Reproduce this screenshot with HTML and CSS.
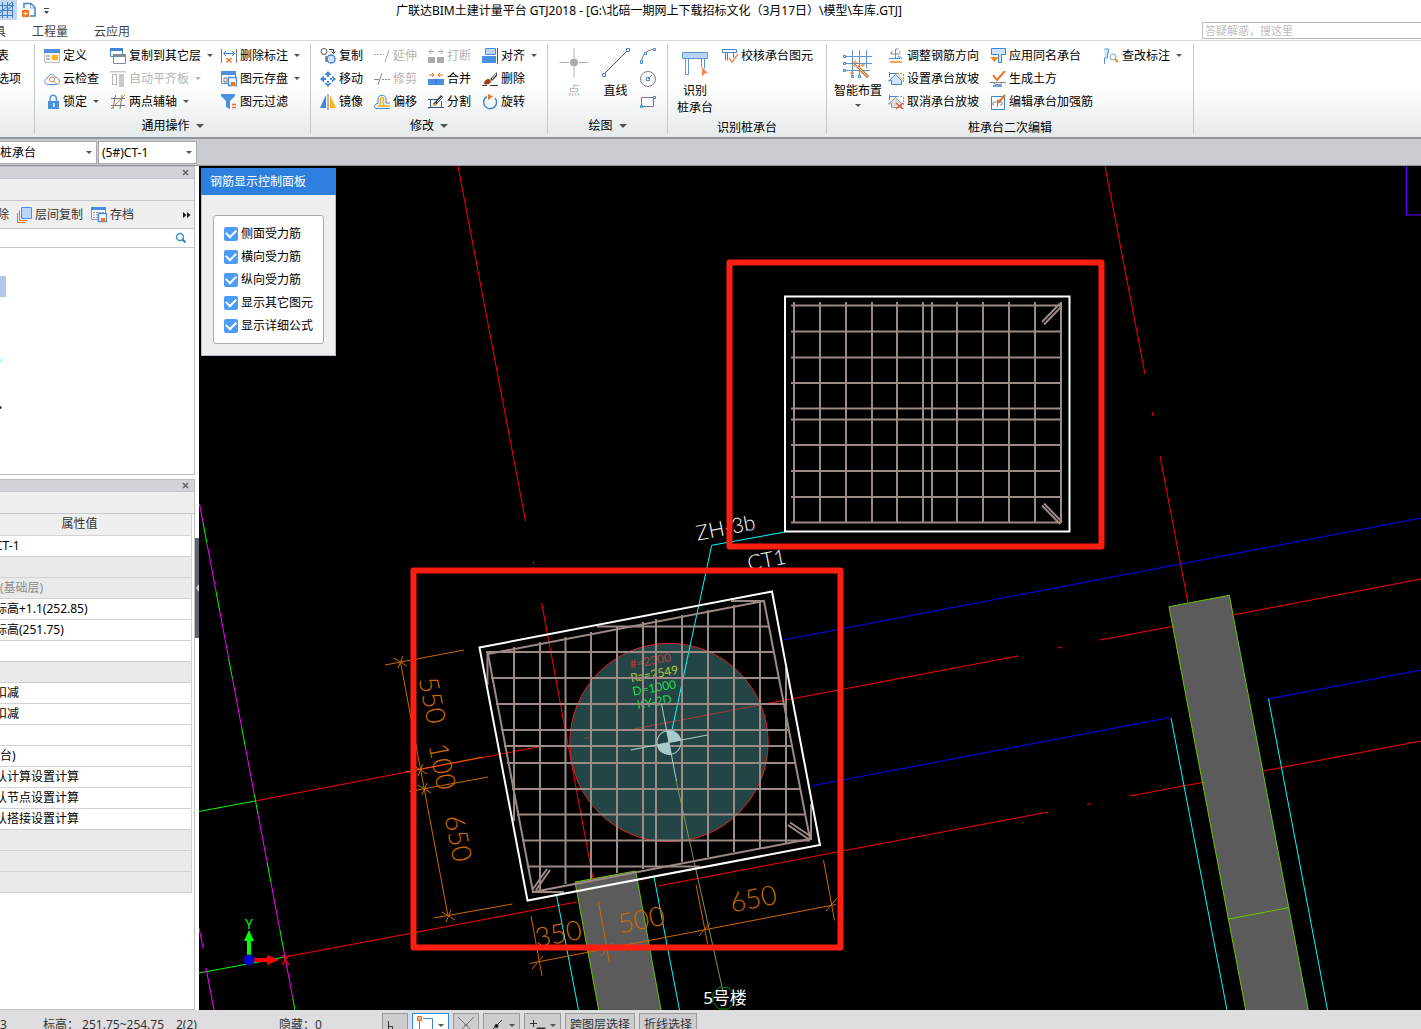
FILE: index.html
```html
<!DOCTYPE html>
<html lang="zh-CN">
<head>
  <meta charset="UTF-8">
  <meta name="viewport" content="width=device-width, initial-scale=1.0">
  <title>广联达BIM土建计量平台 GTJ2018</title>
  <link rel="stylesheet" href="styles.css">
</head>
<body>
  <!-- 标题栏 -->
  <header class="titlebar">
    <button type="button" class="quick active" aria-label="轴网">
      <svg width="17" height="18" viewBox="0 0 17 18" fill="none" stroke="#3d80cc"><path d="M0 4.500h14M0 9.500h13M0 14.500h13M2.500 1v16M7.500 1v16M12.500 1v16M0 12L12 1M6 10l7-6"/></svg>
    </button>
    <button type="button" class="quick" aria-label="新建">
      <svg width="16" height="16" viewBox="0 0 16 16" fill="none"><path d="M3 6V1.500h7l4 4V14h-5" stroke="#3d80cc" stroke-width="1.500"/><path d="M9.500 2v4h4" stroke="#8fa3b8"/><path d="M1 8h7v7H1z" fill="#ee7420"/><path d="M4.500 9.500v4M2.500 11.500h4" stroke="#fff"/></svg>
    </button>
    <button type="button" class="quick" aria-label="更多">
      <svg width="7" height="8" viewBox="0 0 7 8"><path d="M1 1h5v1H1zM1 4h5L3.500 7z" fill="#444"/></svg>
    </button>
    <h1>广联达BIM土建计量平台 GTJ2018 - [G:\北碚一期网上下载招标文化（3月17日）\模型\车库.GTJ]</h1>
  </header>
  <nav class="tabs">
    <a href="#" class="cut">具</a>
    <a href="#">工程量</a>
    <a href="#">云应用</a>
    <input type="text" class="ask" placeholder="答疑解惑，搜这里" aria-label="答疑解惑">
  </nav>

  <!-- 功能区 -->
  <section class="ribbon">
    <div class="group g-table">
      <div class="group-body">
        <div class="col">
          <button type="button" class="cmd cut">表</button>
          <button type="button" class="cmd cut">选项</button>
        </div>
      </div>
    </div>

    <div class="group g-common">
      <div class="group-body">
        <div class="col">
          <button type="button" class="cmd"><svg width="16" height="16" viewBox="0 0 16 16"><path d="M.5 1.500h15v13H.5z" fill="#f4f4f4" stroke="#b9c0c6"/><path d="M0 1h16v4H0z" fill="#4b90e0"/><path d="M2 8h4M2 11h4" stroke="#888"/><path d="M8 7h6v5H8z" fill="#fbb117"/></svg>定义</button>
          <button type="button" class="cmd"><svg width="16" height="16" viewBox="0 0 16 16" fill="none"><path d="M4 13.500C-.5 13.500 0 7.500 3.500 7.500 4 3 10 2 11.500 6.500c5 0 5 7 1 7z" stroke="#4b90e0"/><circle cx="8" cy="8.500" r="2.500" stroke="#ee7420"/><path d="M10 10.500l2.500 2.500" stroke="#ee7420"/></svg>云检查</button>
          <button type="button" class="cmd drop"><svg width="16" height="16" viewBox="0 0 16 16"><path d="M6 8V4.500a3.200 3.200 0 0 1 6.400 0V8" fill="none" stroke="#4b90e0" stroke-width="1.500"/><path d="M4 7h11v8H4z" fill="#4b90e0"/><path d="M9 9h1.500v4H9z" fill="#fff"/></svg>锁定</button>
        </div>
        <div class="col">
          <button type="button" class="cmd drop"><svg width="16" height="16" viewBox="0 0 16 16" fill="#fff"><path d="M.5.5h12v8H.5z" stroke="#3f85d6"/><path d="M0 0h13v3H0z" fill="#3f85d6"/><path d="M3.500 6.500h12v9h-12z" stroke="#7d8b96"/><path d="M3 6h13v3H3z" fill="#7d8b96"/></svg>复制到其它层</button>
          <button type="button" class="cmd drop" disabled><svg width="16" height="16" viewBox="0 0 16 16"><path d="M0 0h16v1.500H0zM9 3h5v13H9z" fill="#c9c9c9"/><path d="M2.500 3.500h4v10h-4z" fill="none" stroke="#b5b5b5"/></svg>自动平齐板</button>
          <button type="button" class="cmd drop"><svg width="16" height="16" viewBox="0 0 16 16" fill="none"><path d="M1 4.500h14M1 11.500h14M5.500 1L3 15M12 1l-2 14" stroke="#778"/><path d="M1 15L15 1" stroke="#e08a30"/></svg>两点辅轴</button>
        </div>
        <div class="col">
          <button type="button" class="cmd drop"><svg width="16" height="16" viewBox="0 0 16 16" fill="none"><path d="M.5 1v14M15.500 1v14" stroke="#778"/><path d="M3 5.500h10M5 3L2.500 5.500 5 8M11 3l2.500 2.500L11 8" stroke="#3f85d6"/><path d="M5.500 10l5 4.500M10.500 10l-5 4.500" stroke="#ee7420" stroke-width="1.500"/></svg>删除标注</button>
          <button type="button" class="cmd drop"><svg width="16" height="16" viewBox="0 0 16 16"><path d="M.5.5h14v12H.5z" fill="#fff" stroke="#4b90e0"/><path d="M0 0h15v4H0z" fill="#4b90e0"/><path d="M3 7h3v4H3z" fill="none" stroke="#777"/><path d="M7.500 6.500h8v8h-8z" fill="#fff" stroke="#4b90e0" stroke-width="1.500"/><path d="M10 11h4v4h-4z" fill="#ee7420"/></svg>图元存盘</button>
          <button type="button" class="cmd"><svg width="16" height="16" viewBox="0 0 16 16"><path d="M0 0h14v2L9 7v8l-4-2V7L0 2z" fill="#4b90e0"/><path d="M11 10.500h4M11 13.500h4" stroke="#ee7420" stroke-width="1.500"/></svg>图元过滤</button>
        </div>
      </div>
      <button type="button" class="group-label drop">通用操作</button>
    </div>

    <div class="group g-edit">
      <div class="group-body">
        <div class="col">
          <button type="button" class="cmd"><svg width="16" height="16" viewBox="0 0 16 16" fill="none"><circle cx="4" cy="3.500" r="3" stroke="#555"/><circle cx="11" cy="11" r="4" fill="#cfe3fb" stroke="#3f85d6" stroke-width="1.500"/><path d="M9 1.500h4.500v3M11.500 3.500l2 2 2-2M6 8v6" stroke="#333"/></svg>复制</button>
          <button type="button" class="cmd"><svg width="16" height="16" viewBox="0 0 16 16" fill="#3f85d6"><path d="M8 0l3.500 4h-7zM8 16l3.500-4h-7zM0 8l4-3.500v7zM16 8l-4-3.500v7zM7 3h2v3H7zM7 10h2v3H7zM3 7h3v2H3zM10 7h3v2h-3z"/></svg>移动</button>
          <button type="button" class="cmd"><svg width="16" height="16" viewBox="0 0 16 16"><path d="M6 1v13H0z" fill="#3f85d6"/><path d="M10 1v13h6z" fill="#fbb117"/><path d="M8 0v16" stroke="#777"/></svg>镜像</button>
        </div>
        <div class="col">
          <button type="button" class="cmd" disabled><svg width="16" height="16" viewBox="0 0 16 16" fill="none" stroke="#aaa"><path d="M0 6.500h10" stroke-dasharray="2 1"/><path d="M15 2l-4 12"/></svg>延伸</button>
          <button type="button" class="cmd" disabled><svg width="16" height="16" viewBox="0 0 16 16" fill="none" stroke="#888"><path d="M0 8.500h5M8 2L4 14"/><path d="M8 8.500h8" stroke-dasharray="2 1"/></svg>修剪</button>
          <button type="button" class="cmd"><svg width="16" height="16" viewBox="0 0 16 16" fill="none"><path d="M16 14.500H2c-2-1-2-5 2-5V5c0-5 8-5 8 0v4h4" stroke="#3f85d6"/><path d="M16 12H3.500M6.500 11V5c0-2 3-2 3 0v6" stroke="#fbb117" stroke-width="1.500"/></svg>偏移</button>
        </div>
        <div class="col">
          <button type="button" class="cmd" disabled><svg width="16" height="16" viewBox="0 0 16 16"><path d="M0 9h7v6H0zM9 9h7v6H9z" fill="#aaa"/><path d="M1 3.500h5M3.500 1L1 3.500 3.500 6M10 3.500h5M12.500 1L15 3.500 12.500 6" fill="none" stroke="#aaa"/></svg>打断</button>
          <button type="button" class="cmd"><svg width="16" height="16" viewBox="0 0 16 16"><path d="M0 8h16v6H0z" fill="#4b90e0"/><path d="M8 8v6" stroke="#2d6bb5"/><path d="M1 4h5M4 2l2 2-2 2M15 4h-5M12 2l-2 2 2 2" fill="none" stroke="#ee7420"/></svg>合并</button>
          <button type="button" class="cmd"><svg width="16" height="16" viewBox="0 0 16 16" fill="none"><path d="M0 5.500h9M2.500 5v9M0 13.500h16M13.500 7v7M5 13L0 14" stroke="#3c5580"/><path d="M6 11l8-9" stroke="#444" stroke-width="3"/><path d="M9 8l5-5" stroke="#eee"/><path d="M5 12l2-3 2 2z" fill="#fbb117"/></svg>分割</button>
        </div>
        <div class="col">
          <button type="button" class="cmd drop"><svg width="16" height="16" viewBox="0 0 16 16"><path d="M3.500.5h10v6h-10z" fill="#b9d6fa" stroke="#4b90e0"/><path d="M0 8h14v7H0z" fill="#4b90e0"/><path d="M15.500 0v16" stroke="#555"/></svg>对齐</button>
          <button type="button" class="cmd"><svg width="16" height="16" viewBox="0 0 16 16"><path d="M0 14.500h5M8 14.500h8" stroke="#333"/><path d="M8 8l7-7v4l-5 5z" fill="#444"/><path d="M10 8l4-5" stroke="#eee"/><path d="M2 13c0-3 2-5 5-5l2 2c0 3-4 4-7 3z" fill="#a33c16"/></svg>删除</button>
          <button type="button" class="cmd"><svg width="16" height="16" viewBox="0 0 16 16"><path d="M5 2.500A6.500 6.500 0 1 0 13 4" fill="none" stroke="#3f85d6" stroke-width="1.500"/><path d="M6 0l5 2.500L6 6z" fill="#ee7420"/></svg>旋转</button>
        </div>
      </div>
      <button type="button" class="group-label drop">修改</button>
    </div>

    <div class="group g-draw">
      <div class="group-body">
        <button type="button" class="big" disabled><svg width="30" height="30" viewBox="0 0 30 30"><path d="M.5 14.500h29M15 .5v29" stroke="#aaa"/><circle cx="15" cy="14.500" r="4.500" fill="#aaa" stroke="#fff"/></svg>点</button>
        <button type="button" class="big"><svg width="30" height="30" viewBox="0 0 30 30"><path d="M3 26L27 2" stroke="#555"/><path d="M1.500 25.500h3v3h-3zM25.500.5h3v3h-3z" fill="#fff" stroke="#3f85d6"/></svg>直线</button>
        <div class="col">
          <button type="button" class="cmd" aria-label="弧线"><svg width="16" height="16" viewBox="0 0 16 16" fill="#fff"><path d="M1.500 14C2 6 7 2 14 1.500" fill="none" stroke="#778"/><path d="M.5 12.500h2v3h-2zM4.500 4.500h2v2h-2zM13.500.5h2v2h-2z" stroke="#3f85d6"/></svg></button>
          <button type="button" class="cmd" aria-label="圆"><svg width="16" height="16" viewBox="0 0 16 16" fill="none"><circle cx="8" cy="8" r="7.500" stroke="#778"/><path d="M8 8l4-4M6.500 6.500h3v3h-3z" stroke="#3f85d6"/></svg></button>
          <button type="button" class="cmd" aria-label="矩形"><svg width="16" height="16" viewBox="0 0 16 16" fill="#fff"><path d="M1.500 3.500h12v9h-12z" stroke="#778"/><path d="M.5 11.500h2v2h-2zM13.500 2.500h2v2h-2z" stroke="#3f85d6"/></svg></button>
        </div>
      </div>
      <button type="button" class="group-label drop">绘图</button>
    </div>

    <div class="group g-detect">
      <div class="group-body">
        <button type="button" class="big"><svg width="30" height="30" viewBox="0 0 30 30"><path d="M2.500 4.500h25v6h-25z" fill="#b9d6fa" stroke="#5a96d8"/><path d="M5.500 10.500h3v16h-3zM21.500 10.500v9M24.500 10.500v10" fill="none" stroke="#5a96d8"/><path d="M22 19l6 6-3 .5-3 3z" fill="#f58a5a"/></svg>识别<br>桩承台</button>
        <div class="col">
          <button type="button" class="cmd"><svg width="16" height="16" viewBox="0 0 16 16" fill="none"><path d="M.5 1.500h14v3H.5zM3.500 4.500v8M5.500 4.500v8M11.500 4.500v5" stroke="#3f85d6"/><path d="M7 10l3 4 6-8" stroke="#f58a5a" stroke-width="1.500"/></svg>校核承台图元</button>
        </div>
      </div>
      <div class="group-label plain">识别桩承台</div>
    </div>

    <div class="group g-cap">
      <div class="group-body">
        <button type="button" class="big drop"><svg width="30" height="30" viewBox="0 0 30 30" fill="none"><path d="M3 8.500h26M3 15.500h26M3 22.500h24M9.500 2v26M16.500 2v26M23.500 2v18" stroke="#5a96d8"/><path d="M.5 7.500h2v2h-2zM.5 14.500h2v2h-2zM.5 21.500h2v2h-2zM8.500 27.500h2v2h-2zM15.500 27.500h2v2h-2z" fill="#fff" stroke="#3f85d6"/><path d="M14 18l11 11" stroke="#c47a3a" stroke-width="3"/><path d="M14 18l10 10" stroke="#f2c79a"/><path d="M10 14l4 4M14 14l-4 4M12 12v7M20 15v4M9 23v4M7 25h4M18 17h4" stroke="#ee7420"/></svg>智能布置</button>
        <div class="col">
          <button type="button" class="cmd"><svg width="16" height="16" viewBox="0 0 16 16" fill="none"><path d="M7.500 10V1h3M3 6h8c2-1 1-3 0-3M3 6c-1-2 1-3 2-2" stroke="#7d8b96"/><path d="M1 10.500h11" stroke="#3f85d6"/><path d="M2 14h12" stroke="#f08a20" stroke-width="1.500"/><path d="M10 8l4 2.500" stroke="#3f85d6"/></svg>调整钢筋方向</button>
          <button type="button" class="cmd"><svg width="16" height="16" viewBox="0 0 16 16" fill="none"><path d="M1.500 1v5M1.500 2.500H9" stroke="#3f85d6"/><path d="M.5 10l7-6.500 6 6v4H3.500v-4z" fill="#cfe3fb" stroke="#3f85d6"/><path d="M9 2.500h6M15.500 3v8M10 3l5 6" stroke="#f08a20" stroke-dasharray="2 1"/></svg>设置承台放坡</button>
          <button type="button" class="cmd"><svg width="16" height="16" viewBox="0 0 16 16" fill="none"><path d="M1.500 1v5M1.500 2.500H9" stroke="#3f85d6"/><path d="M.5 10l7-6.500 6 6v4H3.500v-4z" fill="#ddd" stroke="#999"/><path d="M9 2.500h6M15.500 3v8" stroke="#999" stroke-dasharray="2 1"/><path d="M8 9l7 6M15 9l-7 6" stroke="#e06048" stroke-width="1.500"/></svg>取消承台放坡</button>
        </div>
        <div class="col">
          <button type="button" class="cmd"><svg width="16" height="16" viewBox="0 0 16 16"><path d="M1.500.5h14v6h-4v8h-3v-8h-7z" fill="#cfe3fb" stroke="#3f85d6"/><path d="M0 9h9l-4.500 5z" fill="#f08a20"/></svg>应用同名承台</button>
          <button type="button" class="cmd"><svg width="16" height="16" viewBox="0 0 16 16" fill="none"><path d="M3 4l4 5 8-9" stroke="#ee7420" stroke-width="2"/><path d="M0 11.500h4l1 2h6l1-2h4M4 11.500h8" stroke="#7d8b96"/><path d="M3 15h9" stroke="#3f85d6" stroke-width="1.500"/></svg>生成土方</button>
          <button type="button" class="cmd"><svg width="16" height="16" viewBox="0 0 16 16" fill="none"><path d="M1.500 2.500h13v13h-13z" fill="#fff" stroke="#3f85d6"/><path d="M7.500 13V6h3M4 11H3V8h9v3h-2" stroke="#7d8b96"/><path d="M8 9l7-8" stroke="#ee7420" stroke-width="2"/></svg>编辑承台加强筋</button>
        </div>
        <div class="col">
          <button type="button" class="cmd drop"><svg width="16" height="16" viewBox="0 0 16 16"><path d="M1.500 1h4v4h-1v5h-3v6" fill="#cfe3fb" stroke="#5a96d8"/><circle cx="10" cy="9" r="3" fill="#fff" stroke="#7aa5dc"/><path d="M12 11l3 3" stroke="#f08a20" stroke-width="2"/></svg>查改标注</button>
        </div>
      </div>
      <div class="group-label plain">桩承台二次编辑</div>
    </div>
  </section>

  <!-- 构件选择 -->
  <section class="pickbar">
    <label class="pick"><select aria-label="构件类型"><option>桩承台</option></select></label>
    <label class="pick"><select aria-label="构件名称"><option>(5#)CT-1</option></select></label>
  </section>

  <main class="work">
    <aside class="dock">
      <section class="pane">
        <div class="pane-title"><button type="button" aria-label="关闭"><svg width="7" height="7" viewBox="0 0 7 7"><path d="M1 1l5 5M6 1L1 6" stroke="#666" stroke-width="1.500"/></svg></button></div>
        <div class="pane-head"></div>
        <div class="pane-tools">
          <button type="button" class="cmd cut">除</button>
          <button type="button" class="cmd"><svg width="15" height="16" viewBox="0 0 15 16" fill="none"><path d="M.5 6v9.500h8M2.500 3.500v10h8" stroke="#ee7420"/><path d="M4.500.5h10v11h-10z" fill="#b9d6fa" stroke="#4b90e0"/></svg>层间复制</button>
          <button type="button" class="cmd"><svg width="16" height="16" viewBox="0 0 16 16"><path d="M.5.5h14v12H.5z" fill="#fff" stroke="#8a9aaa"/><path d="M0 0h15v3H0z" fill="#4b90e0"/><path d="M2 5.500h11M2 8h5M2 10.500h5" stroke="#999" stroke-dasharray="2 1"/><path d="M7.500 6.500h8v8h-8z" fill="#fff" stroke="#4b90e0" stroke-width="1.500"/><path d="M10 11h4v4h-4z" fill="#ee7420"/></svg>存档</button>
          <button type="button" class="more" aria-label="更多"><svg width="8" height="6" viewBox="0 0 8 6"><path d="M0 0l3.500 3L0 6zM4 0l3.500 3L4 6z" fill="#222"/></svg></button>
        </div>
        <div class="pane-search">
          <input type="text" aria-label="搜索构件">
          <svg width="12" height="12" viewBox="0 0 12 12" fill="none"><circle cx="5" cy="5" r="3.500" stroke="#3a94c8" stroke-width="1.500"/><path d="M7.500 7.500l3 3" stroke="#2f7fb2" stroke-width="2"/></svg>
        </div>
        <div class="tree">
          <svg width="8" height="140" viewBox="0 0 8 140"><path d="M0 0h6v21H0z" fill="#b0c9ea"/><path d="M0 82h1v5H0z" fill="#9ff"/><circle cx="0" cy="131.500" r="1.500" fill="#223"/></svg>
        </div>
      </section>

      <section class="pane props">
        <div class="pane-title"><button type="button" aria-label="关闭"><svg width="7" height="7" viewBox="0 0 7 7"><path d="M1 1l5 5M6 1L1 6" stroke="#666" stroke-width="1.500"/></svg></button></div>
        <div class="pane-head"></div>
        <table>
          <thead><tr><th>属性值</th></tr></thead>
          <tbody>
            <tr><td class="cut">CT-1</td></tr>
            <tr class="gray"><td></td></tr>
            <tr class="gray"><td>(基础层)</td></tr>
            <tr><td class="cut">标高+1.1(252.85)</td></tr>
            <tr><td class="cut">标高(251.75)</td></tr>
            <tr><td></td></tr>
            <tr class="gray"><td></td></tr>
            <tr><td class="cut">扣减</td></tr>
            <tr><td class="cut">扣减</td></tr>
            <tr><td></td></tr>
            <tr><td>台)</td></tr>
            <tr><td class="cut">认计算设置计算</td></tr>
            <tr><td class="cut">认节点设置计算</td></tr>
            <tr><td class="cut">认搭接设置计算</td></tr>
            <tr class="gray"><td></td></tr>
            <tr class="gray"><td></td></tr>
            <tr class="gray"><td></td></tr>
          </tbody>
        </table>
      </section>
    </aside>

    <div class="splitter">
      <button type="button" aria-label="收起"><svg width="4" height="8" viewBox="0 0 4 8"><path d="M4 0v8L1 4z" fill="#ccd2d8"/></svg></button>
    </div>

    <div class="canvas">
      <svg class="drawing" viewBox="199 166 1222 844" preserveAspectRatio="xMinYMin slice" fill="none">
        <!-- 梁 -->
        <g fill="#5b5b5b" stroke="#6bc400">
          <path d="M1245.700 1010L1169 606.700l60.300-11.400L1308.300 1010"/>
          <path d="M1228.700 919l60-11.300"/>
          <path d="M598.700 1010L575 882l60.700-11L661 1010"/>
        </g>
        <!-- 轴线 -->
        <g stroke="#f00">
          <path d="M458 166l67.500 355M533 561l1 3M541.700 603L593 879"/>
          <path d="M1105 166l40 208M1152 412l1 4M1160 456l28 147"/>
          <path d="M255 801l283-54M770 703l248-47M1058 648l4-1M1100 640l72-13.500M1233 615l188-36"/>
          <path d="M285 957l292-55M658 886l390-74M1087 804.500l4-1M1130 796l72-13.500M1263 771l158-30"/>
        </g>
        <path d="M783 640l638-122M811 786l359-68.500M1268 699l153-29" stroke="#00f"/>
        <path d="M1406.500 166v49h15" stroke="#6a00ff"/>
        <path d="M199 811.500L255 801M199 973l86-16" stroke="#0f0"/>
        <path d="M199.500 504L295 1010" stroke="#0f0" stroke-dasharray="21 48" stroke-dashoffset="-19"/>
        <path d="M199.500 504L295 1010" stroke="#f0f" stroke-dasharray="48 21" stroke-dashoffset="29"/>
        <path d="M199 928l4 20M206 968l8 42" stroke="#f0f"/>
        <path d="M1171 718l56 292M1268.500 699l59 311M556.700 896l21.800 114M654 877l25.500 133" stroke="#0ff"/>

        <!-- 桩 -->
        <circle cx="669" cy="742.500" r="99.200" fill="#234545" stroke="#e02020"/>
        <path d="M634 729l136-26M585 738.500l4-1" stroke="#a63c3c"/>
        <path d="M785 532l-73.300 13.300L672 730" stroke="#0ff"/>
        <path d="M676 780l48 216" stroke="#7d9350"/>
        <g class="pile-text">
          <text transform="translate(651 665) rotate(-10)" fill="#b04040">#=2300</text>
          <text transform="translate(655 678) rotate(-10)" fill="#b4c83c">Ra=2549</text>
          <text transform="translate(655 692) rotate(-10)" fill="#1fd84a">D=1000</text>
          <text transform="translate(655 706) rotate(-10)" fill="#1fd84a">KY-2D</text>
        </g>

        <!-- 承台一钢筋 -->
        <path stroke="#9c8a84" stroke-width="2" d="M794 302v221M820 302v221M846 302v221M872 302v221M897 302v221M923 302v221M932 302v221M957 302v221M983 302v221M1009 302v221M1035 302v221M1061 302v221M791 305.500h270M791 331.500h270M791 357.500h270M791 383h270M791 408.500h270M791 419.500h270M791 445h270M791 471h270M791 497h270M791 522.500h270M1042 322l18-18.500M1044 324.500l18-18.500M1042 505.500l18 18.500M1044 503.500l18 18.500"/>
        <path d="M785 296.500h284.500v235H785z" stroke="#fff" stroke-width="2"/>

        <!-- 承台二钢筋 -->
        <g stroke="#9c8a84" stroke-width="2">
          <path d="M488 654l276-53 46 238-277 53z"/>
          <path d="M731 601h33M597 626.500h172M486 652h287M491 678h288M496 704h287M501 730h287M504 746h287M507 763h289M512 789h288M517 814.500h289M522 840.500h288M527 866.500h173M533 892h31"/>
          <path d="M487.500 652v33M514 647v174M540 642v249M565.500 637v247M591 632v247M617 627v246M643 622v247M656 619v248M682 615v247M708 610v247M734 605v247M760 601v247M786 668v175M811 804v36"/>
          <path d="M547 869l-14 20M550 870l-14 20M788 825l21 14.500M790 822.500l21 14"/>
        </g>
        <path d="M479.500 647.500l292.500-56 48 253.500-292.500 55.500z" stroke="#fff" stroke-width="2"/>

        <!-- 桩中心 -->
        <g transform="translate(669 742.500) rotate(-11)">
          <circle r="12" stroke="#a9cbcb"/>
          <path d="M0 0V-12A12 12 0 0 1 12 0zM0 0V12A12 12 0 0 1-12 0z" fill="#a9cbcb"/>
          <path d="M-39 0h78M0-39v78" stroke="#a9cbcb"/>
        </g>

        <!-- 尺寸标注 -->
        <g stroke="#d06800">
          <path d="M400.500 662L448 916M385 665l79-15M405 772l78-15M409.500 791.500L488 777M433.500 918l79-14"/>
          <path d="M394 658l13 8M403 656l-5 12M414 766l13 8M423 764l-5 12M418 785l13 8M427 783l-5 12M442 912l13 8M451 910l-5 12"/>
          <path d="M529.500 963.500L836 904.500M531 916l11 60M598.500 902.500l11 60.500M696 884.500l11.700 59.500M823.500 860l11 60.500"/>
          <path d="M532 969l11-13M601 956l11-13M699 936l11-13M826 911l11-13"/>
        </g>
        <g class="dim-text">
          <text transform="translate(423 702) rotate(79)">550</text>
          <text transform="translate(433 768) rotate(79)">100</text>
          <text transform="translate(449 840) rotate(79)">650</text>
          <text transform="translate(560 943) rotate(-11)">350</text>
          <text transform="translate(643 929) rotate(-11)">500</text>
          <text transform="translate(755 908) rotate(-11)">650</text>
        </g>
        <g class="mark-text">
          <text transform="translate(727 535) rotate(-11)">ZH-3b</text>
          <text transform="translate(768 567) rotate(-11)">CT1</text>
        </g>
        <path d="M719 987.500h9l7 6v9l-7 6.500h-9l-6-6.500v-9z" stroke="#008a10"/>
        <text x="725" y="1004" class="building">5号楼</text>

        <!-- 红框 -->
        <g stroke="#ff1e10" stroke-width="6" stroke-linejoin="round">
          <path d="M729.500 262.500h372v284h-372zM413.500 570.500h427v377h-427z"/>
        </g>

        <!-- 坐标轴 -->
        <path d="M247 956v-15h-3l5-11 5 11h-3v15z" fill="#0f0"/>
        <path d="M253 958h14v-3l12 5-12 5v-3h-14z" fill="#f00"/>
        <circle cx="249" cy="960" r="5.500" fill="#0000c8"/>
        <text x="249" y="929" class="axis" fill="#0f0">Y</text>
        <text x="285" y="965" class="axis" fill="#f00">X</text>
      </svg>

      <form class="rebar">
        <h2>钢筋显示控制面板</h2>
        <div class="rebar-list">
          <label><input type="checkbox" checked>侧面受力筋</label>
          <label><input type="checkbox" checked>横向受力筋</label>
          <label><input type="checkbox" checked>纵向受力筋</label>
          <label><input type="checkbox" checked>显示其它图元</label>
          <label><input type="checkbox" checked>显示详细公式</label>
        </div>
      </form>
    </div>
  </main>

  <!-- 状态栏 -->
  <footer class="status">
    <span class="floor">3</span>
    <span class="level">标高： 251.75~254.75</span>
    <span class="count">2(2)</span>
    <span class="hidden-count">隐藏：0</span>
    <button type="button" aria-label="正交"><svg width="16" height="18" viewBox="0 0 16 18"><path d="M1.500 5v12M1.500 10.500h4V17" fill="none" stroke="#333"/></svg></button>
    <button type="button" class="on drop" aria-label="捕捉"><svg width="18" height="18" viewBox="0 0 18 18" fill="none"><path d="M2.500 4v14M6 2.500h9.500V18" stroke="#3f85d6"/><path d="M.5.500h4v4h-4z" fill="#f7b27a" stroke="#ee7420"/></svg></button>
    <button type="button" disabled aria-label="交点"><svg width="16" height="18" viewBox="0 0 16 18"><path d="M0 1l16 16M16 1L0 17M6 9h4" stroke="#777"/></svg></button>
    <button type="button" class="drop" aria-label="中点"><svg width="18" height="18" viewBox="0 0 18 18"><path d="M3 15L14 4" stroke="#333"/><circle cx="8.500" cy="10" r="2" fill="#222"/></svg></button>
    <button type="button" class="drop" aria-label="偏移点"><svg width="18" height="18" viewBox="0 0 18 18"><path d="M1 7.500h7M4.500 4v7M3 14.500h4M8 12h8v5H8z" fill="#333" stroke="#333"/></svg></button>
    <button type="button">跨图层选择</button>
    <button type="button">折线选择</button>
  </footer>
</body>
</html>
```

FILE: styles.css
```css
/* Global */
* {
  box-sizing: border-box;
}
body {
  margin: 0;
  height: 100vh;
  display: flex;
  flex-direction: column;
  overflow: hidden;
  background: #fff;
  color: #000;
  font-family: "Noto Sans", "Noto Sans CJK SC", sans-serif;
  font-size: 12px;
  line-height: 20px;
}
button,
input,
select {
  font: inherit;
  color: inherit;
}
button {
  padding: 0;
  border: none;
  background: none;
  white-space: nowrap;
}
svg {
  display: block;
  flex: none;
}

/* Small arrow of a drop-down command */
.drop::after {
  content: "";
  flex: none;
  margin-left: 3px;
  border: 3px solid transparent;
  border-top-color: #555;
  border-bottom: none;
}

/* Title bar and tabs */
.titlebar {
  flex: 0 0 22px;
  display: flex;
  align-items: flex-start;
  gap: 4px;
}
.quick {
  display: flex;
  align-items: center;
  height: 20px;
}
.quick.active {
  background: #c5d7f0;
}
.quick:nth-child(3) {
  margin: 1px 0 0 2px;
}
.titlebar h1 {
  margin: 0 0 0 342px;
  font-size: 12px;
  font-weight: 400;
  line-height: 22px;
  white-space: nowrap;
}
.tabs {
  flex: 0 0 18px;
  min-height: 0;
  display: flex;
  gap: 26px;
}
.tabs a {
  color: #444;
  line-height: 20px;
  text-decoration: none;
}
.tabs .cut {
  margin-left: -6px;
}
.ask {
  width: 219px;
  height: 17px;
  margin-left: auto;
  padding: 0 2px;
  border: 1px solid #bbb;
  border-right: none;
  font-size: 11px;
  outline: none;
}
.ask::placeholder {
  color: #bdbdbd;
}

/* Ribbon */
.ribbon {
  flex: 0 0 99px;
  min-height: 0;
  display: flex;
  border-top: 1px solid #d5d5d5;
  border-bottom: 2px solid #92969a;
  background: linear-gradient(#fff 45%, #e6eaeb);
}
.group {
  display: flex;
  flex-direction: column;
  min-height: 0;
  margin: 3px 0;
  border-right: 1px solid #c6c8c9;
}
.group-body {
  flex: 0 0 69px;
  display: grid;
  grid-template-rows: 69px;
  padding-left: 9px;
}
.g-table {
  width: 35px;
}
.g-table .group-body {
  padding-left: 0;
}
.g-common {
  width: 276px;
}
.g-common .group-body {
  grid-template-columns: 66px 111px 1fr;
}
.g-edit {
  width: 237px;
}
.g-edit .group-body {
  grid-template-columns: 54px 54px 54px 1fr;
}
.g-draw {
  width: 120px;
}
.g-draw .group-body {
  grid-template-columns: 34px 49px 1fr;
}
.g-detect {
  width: 159px;
}
.g-detect .group-body {
  grid-template-columns: 36px 1fr;
  column-gap: 9px;
}
.g-cap {
  width: 367px;
}
.g-cap .group-body {
  grid-template-columns: 48px 96px 107px 1fr;
  column-gap: 6px;
  padding-left: 7px;
}
.col {
  min-width: 0;
}
.cmd {
  display: flex;
  align-items: center;
  gap: 3px;
  height: 23px;
}
.cmd.cut {
  margin-left: -3px;
}
.cmd:disabled,
.big:disabled {
  color: #b4b4b4;
}
.cmd:disabled::after {
  border-top-color: #b4b4b4;
}
.big {
  display: flex;
  flex-direction: column;
  align-items: center;
  justify-self: center;
  align-self: start;
  padding-top: 4px;
  line-height: 17px;
}
.big svg {
  margin-bottom: 4px;
}
.big.drop::after {
  margin: 5px 0 0;
}
.group-label {
  flex: none;
  display: flex;
  align-items: center;
  justify-content: center;
  gap: 3px;
  height: 26px;
}
.group-label.plain {
  height: 30px;
}
.group-label.drop::after {
  border-width: 4px;
  border-bottom: none;
}

/* Component pickers */
.pickbar {
  flex: 0 0 27px;
  display: flex;
  gap: 1px;
  padding-top: 2px;
  border-bottom: 1px solid #8f9397;
  background: #c9ccd1;
}
.pick {
  position: relative;
  width: 99px;
  height: 23px;
}
.pick:first-child {
  width: 97px;
}
.pick select {
  width: 100%;
  height: 100%;
  padding: 0 3px;
  border: 1px solid #aaa;
  border-radius: 0;
  background: #fff;
  appearance: none;
}
.pick:first-child select {
  padding-left: 0;
  border-left: none;
}
.pick::after {
  content: "";
  position: absolute;
  top: 10px;
  right: 5px;
  border: 3px solid transparent;
  border-top-color: #555;
  border-bottom: none;
}

/* Work area */
.work {
  flex: 1;
  display: flex;
  min-height: 0;
}
.dock {
  flex: 0 0 195px;
  min-width: 0;
  display: flex;
  flex-direction: column;
  gap: 4px;
}
.pane {
  flex: 0 0 309px;
  display: flex;
  flex-direction: column;
  border: 1px solid #bdbdc2;
  border-left: none;
}
.pane.props {
  flex: 1;
}
.pane-title {
  display: flex;
  justify-content: flex-end;
  align-items: center;
  height: 11px;
  padding-right: 5px;
  background: #d3d4d9;
}
.pane-head {
  height: 23px;
  border-top: 1px solid #c5c6cb;
  border-bottom: 1px solid #c5c6cb;
  background: #efefef;
}
.pane-tools {
  display: flex;
  align-items: center;
  gap: 8px;
  height: 28px;
  border-bottom: 1px solid #c5c6cb;
  background: #efefef;
  color: #333;
}
.more {
  margin: 0 3px 0 auto;
}
.pane-search {
  display: flex;
  align-items: center;
  height: 19px;
  padding-right: 7px;
  border-bottom: 1px solid #c5c6cb;
}
.pane-search input {
  flex: 1;
  width: 0;
  min-width: 0;
  height: 16px;
  border: none;
  outline: none;
}
.tree {
  padding-top: 28px;
}
.props table {
  width: 192px;
  border-collapse: collapse;
}
.props th,
.props td {
  height: 21px;
  padding: 0;
  border-right: 1px solid #d2d2d2;
  border-bottom: 1px solid #d2d2d2;
  line-height: 20px;
  text-align: left;
  white-space: nowrap;
}
.props th {
  padding-right: 32px;
  background: #efefef;
  color: #333;
  font-weight: 400;
  text-align: center;
}
.props .cut {
  text-indent: -5px;
}
.props .gray {
  background: #eaeaea;
  color: #8c8c8c;
}
.splitter {
  flex: 0 0 4px;
  display: flex;
  align-items: center;
}
.splitter button {
  width: 4px;
  height: 100px;
  background: #5d6670;
}

/* Drawing */
.canvas {
  position: relative;
  flex: 1;
  min-width: 0;
  overflow: hidden;
  background: #000;
}
.drawing {
  width: 100%;
  height: 100%;
}
.drawing text {
  text-anchor: middle;
}
.pile-text {
  font-family: Lato, sans-serif;
  font-size: 12px;
  font-weight: 400;
}
.dim-text {
  fill: #d06800;
  font-family: Lato, sans-serif;
  font-size: 27px;
  font-weight: 300;
}
.mark-text {
  fill: #fff;
  font-family: Lato, sans-serif;
  font-size: 21px;
  font-weight: 300;
}
.building {
  fill: #fff;
  font-size: 17px;
}
.axis {
  font-size: 14px;
}

/* Floating rebar panel */
.rebar {
  position: absolute;
  top: 2px;
  left: 2px;
  width: 135px;
  padding-bottom: 11px;
  border: 1px solid #b8bcc8;
  border-top: none;
  background: #efefef;
}
.rebar h2 {
  margin: 0 -1px 20px;
  padding-left: 9px;
  background: #2d7fe0;
  color: #fff;
  font-size: 12px;
  font-weight: 400;
  line-height: 27px;
}
.rebar-list {
  margin: 0 11px;
  padding: 6px 0 6px 10px;
  border: 1px solid #aaa;
  border-radius: 3px;
  background: #fff;
}
.rebar label {
  display: flex;
  align-items: center;
  gap: 3px;
  height: 23px;
  white-space: nowrap;
}
.rebar input {
  display: grid;
  place-items: center;
  flex: none;
  width: 14px;
  height: 14px;
  margin: 0;
  border-radius: 2px;
  background: #4d9cf8;
  appearance: none;
}
.rebar input:checked::after {
  content: "";
  width: 8px;
  height: 5px;
  margin-bottom: 3px;
  border: solid #fff;
  border-width: 0 0 2px 2px;
  transform: rotate(-45deg);
}

/* Status bar */
.status {
  flex: 0 0 19px;
  min-height: 0;
  display: flex;
  align-items: flex-start;
  gap: 4px;
  padding-top: 3px;
  overflow: hidden;
  background: #dedee0;
  color: #333;
}
.status span {
  flex: none;
  line-height: 24px;
  white-space: nowrap;
}
.floor {
  width: 39px;
}
.level {
  width: 129px;
}
.count {
  width: 99px;
}
.hidden-count {
  width: 99px;
}
.status button {
  display: flex;
  align-items: center;
  flex: none;
  height: 24px;
  padding: 0 4px;
  border: 1px solid #999;
  background: #cdcdcf;
}
.status .on {
  border-color: #2d8cf0;
  background: #fff;
}
```
